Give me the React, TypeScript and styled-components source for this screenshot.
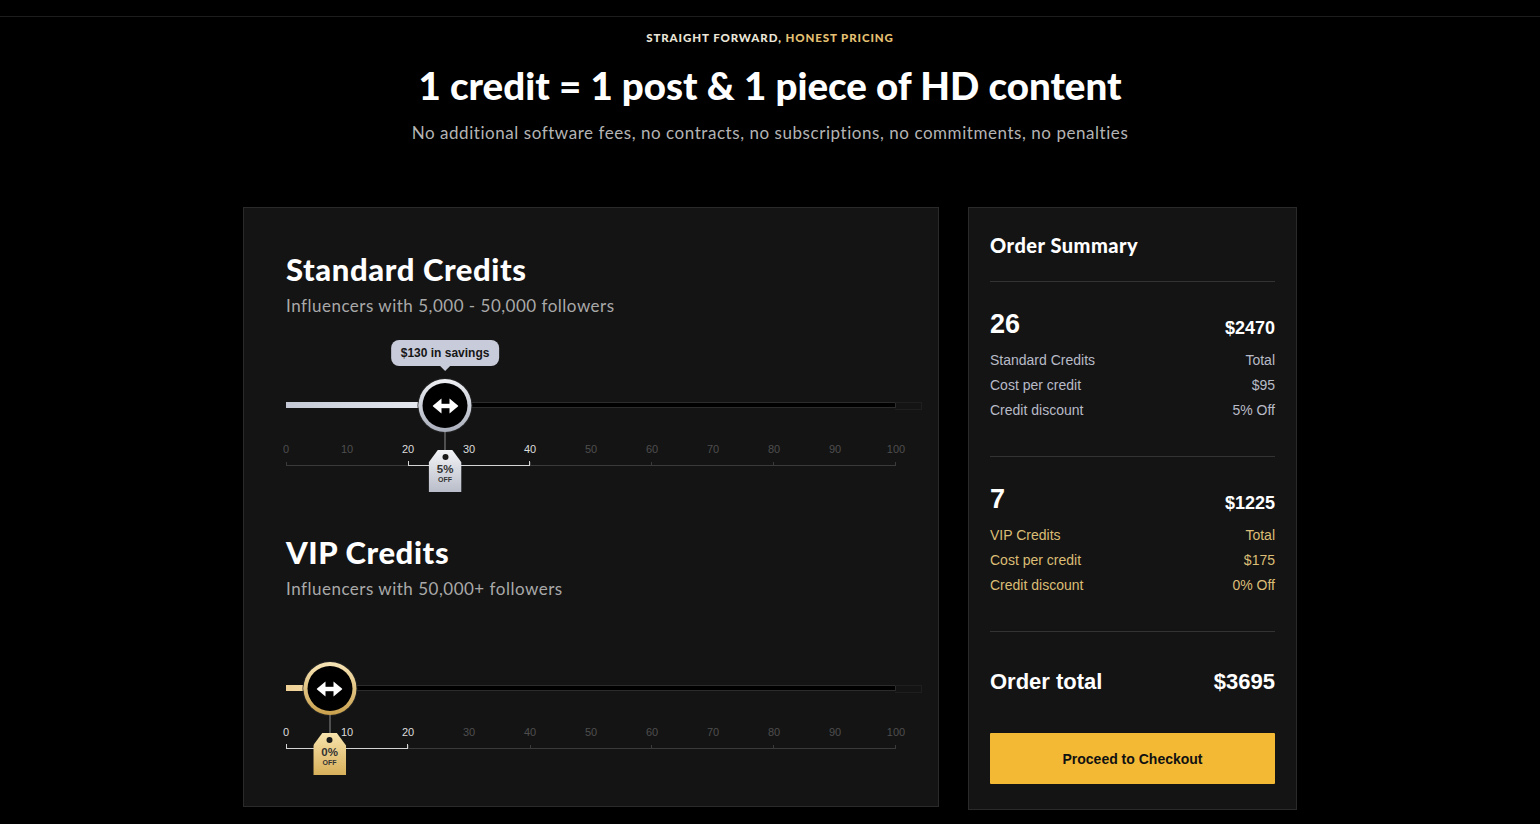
import React from "react";
import styled, { createGlobalStyle } from "styled-components";

const GlobalStyle = createGlobalStyle`
  * { box-sizing: border-box; }
  body {
    margin: 0;
    background: #000;
    font-family: Lato, "Noto Sans", sans-serif;
    color: #fff;
  }
`;

type Variant = "silver" | "gold";

const palette = {
  silver: {
    fill: "linear-gradient(90deg, #c4c9d5, #eceef3)",
    ring: "linear-gradient(180deg, #eef0f4, #a9aebb)",
    tag: "linear-gradient(180deg, #f3f4f7, #b9bdc9)",
  },
  gold: {
    fill: "linear-gradient(90deg, #efd196, #f6e0ae)",
    ring: "linear-gradient(180deg, #f8e6b8, #c9a04c)",
    tag: "linear-gradient(180deg, #f8e3ad, #d7b05a)",
  },
};

const ArrowIcon = () => (
  <svg width="26" height="16" viewBox="0 0 26 16">
    <polygon points="0,8 9,0.5 9,15.5" fill="#fff" />
    <polygon points="26,8 17,0.5 17,15.5" fill="#fff" />
    <rect x="8" y="5.8" width="10" height="4.4" fill="#fff" />
  </svg>
);

function CreditSlider({
  value,
  variant,
  tierStart,
  tierEnd,
  discount,
  savings,
}: {
  value: number;
  variant: Variant;
  tierStart: number;
  tierEnd: number;
  discount: string;
  savings?: string;
}) {
  const labels = [0, 10, 20, 30, 40, 50, 60, 70, 80, 90, 100];
  return (
    <SliderWrap>
      <Track>
        <Fill $variant={variant} style={{ width: `${value}%` }} />
        <Anchor style={{ left: `${value}%` }}>
          {savings && <Tooltip>{savings}</Tooltip>}
          <Knob $variant={variant}>
            <KnobInner>
              <ArrowIcon />
            </KnobInner>
          </Knob>
          <Stem />
          <Tag $variant={variant}>
            <TagPct>{discount}</TagPct>
            <TagOff>OFF</TagOff>
          </Tag>
        </Anchor>
      </Track>
      <Labels>
        {labels.map((l) => (
          <Label key={l} $active={l >= tierStart && l <= tierEnd}>
            <span>{l}</span>
          </Label>
        ))}
      </Labels>
      <Bracket>
        {[0, 1, 2, 3, 4, 5].map((i) => (
          <BracketTick key={i} />
        ))}
        <BracketActive
          style={{ left: `${tierStart}%`, width: `${tierEnd - tierStart}%` }}
        />
      </Bracket>
    </SliderWrap>
  );
}

export default function App() {
  return (
    <>
      <GlobalStyle />
      <TopBar />
      <Header>
        <Eyebrow>
          Straight forward, <Gold>Honest pricing</Gold>
        </Eyebrow>
        <Title>1 credit = 1 post &amp; 1 piece of HD content</Title>
        <Subtitle>
          No additional software fees, no contracts, no subscriptions, no
          commitments, no penalties
        </Subtitle>
      </Header>

      <Cards>
        <CreditsCard>
          <Section>
            <SectionTitle>Standard Credits</SectionTitle>
            <SectionSub>Influencers with 5,000 - 50,000 followers</SectionSub>
            <CreditSlider
              value={26}
              variant="silver"
              tierStart={20}
              tierEnd={40}
              discount="5%"
              savings="$130 in savings"
            />
          </Section>
          <Section $gap>
            <SectionTitle>VIP Credits</SectionTitle>
            <SectionSub>Influencers with 50,000+ followers</SectionSub>
            <CreditSlider
              value={7}
              variant="gold"
              tierStart={0}
              tierEnd={20}
              discount="0%"
            />
          </Section>
        </CreditsCard>

        <SummaryCard>
          <SummaryTitle>Order Summary</SummaryTitle>
          <Divider />
          <Block>
            <NumberRow>
              <Count>26</Count>
              <Price>$2470</Price>
            </NumberRow>
            <Row $gold={false}>
              <span>Standard Credits</span>
              <span>Total</span>
            </Row>
            <Row $gold={false}>
              <span>Cost per credit</span>
              <span>$95</span>
            </Row>
            <Row $gold={false}>
              <span>Credit discount</span>
              <span>5% Off</span>
            </Row>
          </Block>
          <Divider />
          <Block>
            <NumberRow>
              <Count>7</Count>
              <Price>$1225</Price>
            </NumberRow>
            <Row $gold>
              <span>VIP Credits</span>
              <span>Total</span>
            </Row>
            <Row $gold>
              <span>Cost per credit</span>
              <span>$175</span>
            </Row>
            <Row $gold>
              <span>Credit discount</span>
              <span>0% Off</span>
            </Row>
          </Block>
          <Divider />
          <TotalRow>
            <span>Order total</span>
            <span>$3695</span>
          </TotalRow>
          <CheckoutButton>Proceed to Checkout</CheckoutButton>
        </SummaryCard>
      </Cards>
    </>
  );
}

const TopBar = styled.div`
  height: 17px;
  border-bottom: 1px solid #1d1d1d;
`;

const Header = styled.header`
  display: flex;
  flex-direction: column;
  align-items: center;
  padding-top: 14px;
`;

const Eyebrow = styled.div`
  font-size: 11.5px;
  line-height: 14px;
  font-weight: 900;
  text-transform: uppercase;
  letter-spacing: 0.9px;
  color: #ebe6d8;
`;

const Gold = styled.span`
  color: #e5c173;
`;

const Title = styled.h1`
  margin: 19px 0 0;
  font-size: 38.5px;
  line-height: 42px;
  font-weight: 900;
  color: #fff;
`;

const Subtitle = styled.p`
  margin: 16px 0 0;
  font-size: 17px;
  line-height: 22px;
  color: #b4b4b4;
  letter-spacing: 0.55px;
`;

const Cards = styled.main`
  width: 1054px;
  margin: 63px auto 0;
  display: flex;
  gap: 29px;
  align-items: flex-start;
`;

const CreditsCard = styled.section`
  width: 696px;
  background: #141414;
  border: 1px solid #2a2a2a;
  padding: 44px 42px 57px;
`;

const Section = styled.div<{ $gap?: boolean }>`
  margin-top: ${(p) => (p.$gap ? "69px" : "0")};
`;

const SectionTitle = styled.h2`
  margin: 0;
  font-size: 31px;
  line-height: 34px;
  font-weight: 900;
  letter-spacing: 0.6px;
  color: #fff;
`;

const SectionSub = styled.p`
  margin: 9px 0 0;
  font-size: 17px;
  line-height: 22px;
  color: #a9a9a9;
  letter-spacing: 0.5px;
`;

const SliderWrap = styled.div`
  padding-top: 85px;
`;

const Track = styled.div`
  position: relative;
  height: 6px;
  background: #000;
  border: 1px solid #2c2c2c;

  &::after {
    content: "";
    position: absolute;
    left: 100%;
    top: -1px;
    width: 26px;
    height: 6px;
    border: 1px solid #1f1f1f;
    border-left: none;
  }
`;

const Fill = styled.div<{ $variant: Variant }>`
  position: absolute;
  left: -1px;
  top: -1px;
  bottom: -1px;
  background: ${(p) => palette[p.$variant].fill};
`;

const Anchor = styled.div`
  position: absolute;
  top: -24px;
  transform: translateX(-50%);
  display: flex;
  flex-direction: column;
  align-items: center;
  z-index: 2;
`;

const Tooltip = styled.div`
  position: absolute;
  top: -39px;
  left: 50%;
  transform: translateX(-50%);
  white-space: nowrap;
  height: 26px;
  padding: 0 10px;
  display: flex;
  align-items: center;
  border-radius: 8px;
  background: #c8cbd9;
  color: #161616;
  font-family: "Liberation Sans", Arial, sans-serif;
  font-size: 12px;
  font-weight: 700;

  &::after {
    content: "";
    position: absolute;
    top: 100%;
    left: 50%;
    margin-left: -5px;
    border: 5px solid transparent;
    border-top-color: #c8cbd9;
    border-bottom: none;
  }
`;

const Knob = styled.div<{ $variant: Variant }>`
  width: 53px;
  height: 53px;
  border-radius: 50%;
  padding: 4px;
  background: ${(p) => palette[p.$variant].ring};
  box-shadow: 0 0 0 1px #222;
`;

const KnobInner = styled.div`
  width: 100%;
  height: 100%;
  border-radius: 50%;
  background: #000;
  display: flex;
  align-items: center;
  justify-content: center;
`;

const Stem = styled.div`
  width: 1px;
  height: 22px;
  background: #8a8a8a;
`;

const Tag = styled.div<{ $variant: Variant }>`
  position: relative;
  margin-top: -4px;
  width: 33px;
  height: 42px;
  background: ${(p) => palette[p.$variant].tag};
  clip-path: polygon(28% 0, 72% 0, 100% 30%, 100% 100%, 0 100%, 0 30%);
  display: flex;
  flex-direction: column;
  align-items: center;
  padding-top: 13px;
  font-family: "Liberation Sans", Arial, sans-serif;
  color: #333;

  &::before {
    content: "";
    position: absolute;
    top: 4px;
    left: 50%;
    margin-left: -3px;
    width: 6px;
    height: 6px;
    border-radius: 50%;
    background: #1a1a1a;
  }
`;

const TagPct = styled.span`
  font-size: 11.5px;
  line-height: 12px;
  font-weight: 700;
`;

const TagOff = styled.span`
  font-size: 7px;
  line-height: 9px;
  font-weight: 700;
`;

const Labels = styled.div`
  display: flex;
  justify-content: space-between;
  margin-top: 34px;
  height: 14px;
`;

const Label = styled.div<{ $active: boolean }>`
  width: 0;
  display: flex;
  justify-content: center;
  font-family: "Liberation Sans", Arial, sans-serif;
  font-size: 11px;
  line-height: 14px;
  color: ${(p) => (p.$active ? "#dcdcdc" : "#4e4e4e")};

  span {
    white-space: nowrap;
  }
`;

const Bracket = styled.div`
  position: relative;
  margin-top: 5px;
  height: 5px;
  border-bottom: 1px solid #3a3a3a;
  display: flex;
  justify-content: space-between;
`;

const BracketTick = styled.div`
  width: 1px;
  height: 4px;
  background: #3a3a3a;
  margin-top: 1px;
`;

const BracketActive = styled.div`
  position: absolute;
  top: 0;
  bottom: -1px;
  border: 1px solid #d4d4d4;
  border-top: none;
`;

const SummaryCard = styled.aside`
  width: 329px;
  background: #141414;
  border: 1px solid #2a2a2a;
  padding: 26px 21px 25px;
  font-family: "Liberation Sans", Arial, sans-serif;
`;

const SummaryTitle = styled.h3`
  margin: 0;
  font-family: Lato, "Noto Sans", sans-serif;
  font-size: 20px;
  line-height: 22px;
  font-weight: 900;
  letter-spacing: 0.5px;
`;

const Divider = styled.hr`
  margin: 25px 0 0;
  border: none;
  border-top: 1px solid #333;
`;

const Block = styled.div`
  padding-top: 27px;
  padding-bottom: 8px;
`;

const NumberRow = styled.div`
  display: flex;
  justify-content: space-between;
  align-items: baseline;
  line-height: 30px;
  margin-bottom: 6px;
`;

const Count = styled.span`
  font-size: 27px;
  font-weight: 700;
`;

const Price = styled.span`
  font-size: 18px;
  font-weight: 700;
  position: relative;
  top: 1px;
`;

const Row = styled.div<{ $gold: boolean }>`
  display: flex;
  justify-content: space-between;
  font-size: 14px;
  line-height: 25px;
  color: ${(p) => (p.$gold ? "#dbbd75" : "#b8bbc7")};
`;

const TotalRow = styled.div`
  display: flex;
  justify-content: space-between;
  margin-top: 36px;
  font-size: 22px;
  line-height: 28px;
  font-weight: 700;
`;

const CheckoutButton = styled.button`
  display: block;
  width: 100%;
  height: 51px;
  margin-top: 37px;
  border: none;
  border-radius: 1px;
  background: #f3b935;
  color: #111;
  font-family: "Liberation Sans", Arial, sans-serif;
  font-size: 14px;
  font-weight: 700;
  cursor: pointer;
`;
